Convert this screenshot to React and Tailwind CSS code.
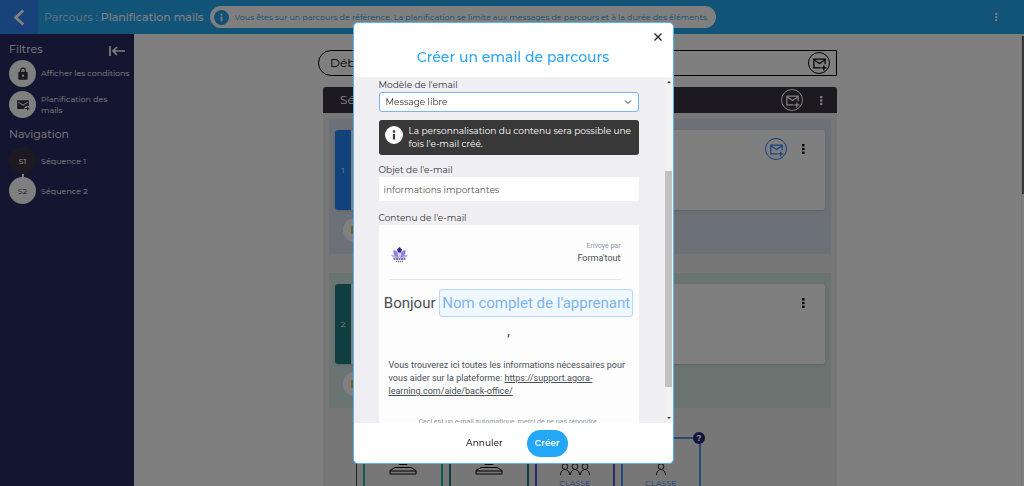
import { useState } from 'react';

function MailPlus({ className }) {
  return (
    <svg viewBox="0 0 24 24" fill="none" stroke="currentColor" strokeWidth="2" className={className} aria-hidden="true">
      <path d="M14 19H3V5h18v8" />
      <path d="M3 6l9 6 9-6" />
      <path d="M19 15v8M15 19h8" />
    </svg>
  );
}

function MailFilled({ className }) {
  return (
    <svg viewBox="0 0 24 24" fill="currentColor" className={className} aria-hidden="true">
      <path d="M2 4h20v9.500a6 6 0 0 0-8 5.500H2zM4 6.300v2l8 5 8-5v-2l-8 5z" fillRule="evenodd" />
      <path d="M19 14v3h-4v2h4v3l4-4z" />
    </svg>
  );
}

function Lock({ className }) {
  return (
    <svg viewBox="0 0 24 24" fill="currentColor" className={className} aria-hidden="true">
      <path
        fillRule="evenodd"
        d="M18 8h-1V6A5 5 0 0 0 7 6v2H6a2 2 0 0 0-2 2v10a2 2 0 0 0 2 2h12a2 2 0 0 0 2-2V10a2 2 0 0 0-2-2zM9 6a3 3 0 0 1 6 0v2H9zm3 11a2 2 0 1 1 0-4 2 2 0 0 1 0 4z"
      />
    </svg>
  );
}

function Dots({ className }) {
  return (
    <svg viewBox="0 0 4 10" fill="currentColor" className={className} aria-hidden="true">
      <rect x="1" y="0" width="2.500" height="2.400" />
      <rect x="1" y="3.800" width="2.500" height="2.400" />
      <rect x="1" y="7.600" width="2.500" height="2.400" />
    </svg>
  );
}

function Info({ className }) {
  return (
    <svg viewBox="0 0 18 18" className={className} aria-hidden="true">
      <circle cx="9" cy="9" r="9" fill="currentColor" />
      <g className="fill-white group-data-[dark=true]:fill-[#383838]">
        <circle cx="9" cy="5.500" r="1.300" />
        <path d="M7.900 8h2.200v5.500H7.900z" />
      </g>
    </svg>
  );
}

function Computer() {
  return (
    <svg viewBox="0 0 28 32" fill="none" stroke="currentColor" className="h-8 w-7" aria-hidden="true">
      <rect x="3" y="1" width="22" height="16" />
      <path d="M9 19.500h10M8 17h12v2.500l-2 2h-8l-2-2zM6 24.500h16l5 3v3.500H1v-3.500zM1 28h26" />
    </svg>
  );
}

function Person() {
  return (
    <svg viewBox="0 0 10 12" fill="none" stroke="currentColor" strokeWidth="0.9" className="h-3 w-[10px]" aria-hidden="true">
      <circle cx="5" cy="3.600" r="2.900" />
      <path d="M.5 12c0-2.700 1-4.300 3-5M9.500 12c0-2.700-1-4.300-3-5" />
    </svg>
  );
}

function Lotus() {
  return (
    <svg viewBox="0 0 34 32" className="h-4 w-[17px]" role="img" aria-label="Forma'tout">
      <path d="M17 22C11 24 3 22 0 16c5-2 11 0 17 6zM17 22c6 2 14 0 17-6-5-2-11 0-17 6z" fill="#b9abf0" />
      <path d="M16 21C8 20 4 14 5 6c6 1 11 6 11 15zM18 21c8-1 12-7 11-15-6 1-11 6-11 15z" fill="#8f7fdc" />
      <path d="M17 21c-5-4-5-8 0-12 5 4 5 8 0 12z" fill="#d6cffa" />
      <path d="M17 0l5 5-2 6h-6l-2-6z" fill="#35249a" />
      <path d="M5 24h24" stroke="#5d4f86" strokeWidth="3" strokeDasharray="4 1" />
      <path d="M10 29h14" stroke="#8a8690" strokeWidth="3" strokeDasharray="3 1" />
    </svg>
  );
}

function RoundButton({ label, className }) {
  return (
    <button type="button" aria-label={label} className={`flex size-[22px] shrink-0 items-center justify-center rounded-full border ${className}`}>
      <MailPlus className="size-[15px]" />
    </button>
  );
}

function Sidebar() {
  return (
    <aside className="w-[134px] shrink-0 bg-[#262b62] px-[9px] pt-[7px] text-white">
      <div className="flex items-start justify-between">
        <h2 className="text-[11px] leading-4">Filtres</h2>
        <button type="button" aria-label="Réduire le menu" className="pt-[5px]">
          <svg viewBox="0 0 16 10" fill="none" stroke="currentColor" strokeWidth="1.700" className="h-[10px] w-4" aria-hidden="true">
            <path d="M1 0v10M16 5H4M8 1L4 5l4 4" />
          </svg>
        </button>
      </div>
      <ul className="mt-[3px] text-[8px] leading-[11px]">
        <li className="flex items-center gap-[5px] pb-1">
          <button type="button" aria-label="Afficher les conditions" className="flex size-[27px] shrink-0 items-center justify-center rounded-full bg-white text-[#3b3340]">
            <Lock className="size-[14px]" />
          </button>
          <span className="whitespace-nowrap">Afficher les conditions</span>
        </li>
        <li className="flex items-center gap-[5px]">
          <button type="button" aria-label="Planification des mails" className="flex size-[27px] shrink-0 items-center justify-center rounded-full bg-white text-[#3b3340]">
            <MailFilled className="size-[14px]" />
          </button>
          <span className="w-[68px]">Planification des mails</span>
        </li>
      </ul>
      <h2 className="mt-2 text-[11px] leading-4">Navigation</h2>
      <nav className="mt-[5px] flex flex-col text-[8px]">
        <a href="#s1" className="flex items-center gap-[5px]">
          <span className="flex size-[27px] items-center justify-center rounded-full bg-[#3b3340] font-medium">S1</span>
          Séquence 1
        </a>
        <span className="ml-[13px] h-[3px] w-[2px] bg-white" />
        <a href="#s2" className="flex items-center gap-[5px]">
          <span className="flex size-[27px] items-center justify-center rounded-full bg-white text-[#3b3340]">S2</span>
          Séquence 2
        </a>
      </nav>
    </aside>
  );
}

function Step({ number, zone, stripe, withMail }) {
  return (
    <section className={`px-[6px] pt-[11px] pb-3 ${zone}`}>
      <div className="flex h-20 overflow-hidden rounded-[3px] bg-white shadow-sm">
        <div className={`flex w-4 items-center justify-center text-[8px] text-white ${stripe}`}>{number}</div>
        <div className="flex flex-1 items-start justify-end gap-[14px] pt-2 pr-5">
          {withMail && <RoundButton label="Ajouter un email" className="border-[#2f86ff] text-[#2f86ff]" />}
          <button type="button" aria-label="Options" className="flex h-[22px] items-center">
            <Dots className="h-[10px] w-1" />
          </button>
        </div>
      </div>
      <div className="mt-2 ml-2 flex size-6 items-center justify-center rounded-full bg-white">
        <span className="h-2 w-2 rounded-[1px] bg-[#ffb21c]" />
      </div>
    </section>
  );
}

function Activities() {
  return (
    <div className="ml-[33px] flex gap-[6px] border-l border-[#444] pl-[6px] text-[8px] text-[#3a82ea]">
      <div className="flex h-20 w-20 flex-col items-center border-2 border-[#25b79b] pt-1 text-black">
        <Computer />
      </div>
      <div className="flex h-20 w-20 flex-col items-center border-2 border-[#1d7f84] pt-1 text-black">
        <Computer />
      </div>
      <div className="flex h-20 w-20 flex-col items-center border-2 border-[#5b56c9] pt-6 text-[#5b6fd8]">
        <div className="flex text-black">
          <Person />
          <Person />
          <Person />
        </div>
        <span className="mt-[2px]">CLASSE</span>
      </div>
      <div className="relative flex h-20 w-20 flex-col items-center border-2 border-[#4b96f5] pt-6">
        <span className="absolute -top-[7px] -right-[6px] flex size-3 items-center justify-center rounded-full bg-[#262b7a] text-[9px] font-bold text-white">?</span>
        <span className="text-black">
          <Person />
        </span>
        <span className="mt-[2px]">CLASSE</span>
      </div>
    </div>
  );
}

function Course() {
  return (
    <main className="flex flex-1 overflow-hidden bg-white">
      <div className="mx-auto w-full max-w-[519px] pt-4">
        <div className="flex h-[26px] items-center justify-between rounded-l-full border border-black pr-[6px] pl-[11px] text-xs">
          Début
          <RoundButton label="Ajouter un email au début" className="border-black" />
        </div>
        <div className="mt-[11px] ml-[5px] bg-[#f1efef]">
          <div className="flex h-[26px] items-center rounded-t-[3px] bg-[#3b3340] px-[17px] text-xs text-white">
            <span className="flex-1">Séquence 1</span>
            <RoundButton label="Ajouter un email à la séquence" className="border-white" />
            <button type="button" aria-label="Options de la séquence" className="-mr-[5px] ml-[14px] px-[2px]">
              <Dots className="h-[9px] w-1" />
            </button>
          </div>
          <div className="flex flex-col gap-[19px] px-[6px] pt-[6px]">
            <Step number="1" zone="bg-[#d8e2f0]" stripe="bg-[#2385f8]" withMail />
            <Step number="2" zone="bg-[#d4e8e2]" stripe="bg-[#1c7c80]" />
          </div>
          <div className="mt-[29px]">
            <Activities />
          </div>
        </div>
      </div>
      <div className="w-[3px] border-l border-[#eee]">
        <div className="mt-[2px] h-[35%] bg-[#6d6d6d]" />
      </div>
    </main>
  );
}

function EmailPreview() {
  return (
    <article className="bg-[#fdfdfd] pt-4 text-[#4a4f55] [font-family:Roboto,sans-serif]">
      <div className="mr-[18px] ml-[10px] flex items-center justify-between border-b border-[#e3e6ea] pb-[14px]">
        <div className="px-[2px] pt-1">
          <Lotus />
        </div>
        <div className="text-right">
          <p className="text-[7px] leading-[10px] text-[#8e98a8]">Envoyé par</p>
          <p className="text-[9px] leading-[14px]">Forma'tout</p>
        </div>
      </div>
      <p className="mt-[9px] text-center text-[15px] leading-7 whitespace-nowrap">
        Bonjour{' '}
        <span className="inline-block rounded-[3px] border border-[#b4d8fb] bg-[#f0f8ff] px-[2px] leading-[26px] text-[#7db5f0]">
          Nom complet de l'apprenant
        </span>
        <span className="block">,</span>
      </p>
      <p className="mt-[14px] px-[10px] text-[9px] leading-[13px]">
        Vous trouverez ici toutes les informations nécessaires pour vous aider sur la plateforme:{' '}
        <a href="#aide" className="underline">
          https://support.agora-learning.com/aide/back-office/
        </a>
      </p>
      <p className="mt-[19px] text-center text-[7px] leading-[10px] whitespace-nowrap text-[#8e98a8]">
        Ceci est un e-mail automatique, merci de ne pas répondre.
      </p>
    </article>
  );
}

function Scrollbar() {
  return (
    <div className="flex w-2 shrink-0 flex-col items-center justify-between bg-[#f1f1f1] py-1" aria-hidden="true">
      <svg viewBox="0 0 4 2" className="h-[2px] w-1 fill-[#404040]">
        <path d="M0 2h4L2 0z" />
      </svg>
      <div className="mt-[58px] h-[216px] w-[7px] bg-[#c1c1c1]" />
      <svg viewBox="0 0 4 2" className="h-[2px] w-1 fill-[#404040]">
        <path d="M0 0h4L2 2z" />
      </svg>
    </div>
  );
}

function EmailDialog() {
  const [subject, setSubject] = useState('informations importantes');

  return (
    <div className="fixed inset-0 flex justify-center bg-black/50 py-[22px] pl-[2px]">
      <form
        role="dialog"
        aria-labelledby="dialog-title"
        onSubmit={(e) => e.preventDefault()}
        className="flex w-full max-w-[321px] flex-col overflow-hidden rounded-[5px] border border-[#55b4f2] bg-white text-[#333]"
      >
        <div className="relative flex h-[54px] shrink-0 items-end justify-center pb-[10px]">
          <h1 id="dialog-title" className="text-[14px] leading-5 font-medium text-[#28a5f5]">
            Créer un email de parcours
          </h1>
          <button type="button" aria-label="Fermer" className="absolute top-[10px] right-[11px]">
            <svg viewBox="0 0 8 8" stroke="#222" strokeWidth="1.300" className="size-2" aria-hidden="true">
              <path d="M.5.500l7 7M7.500.500l-7 7" />
            </svg>
          </button>
        </div>

        <div className="flex min-h-0 flex-1 bg-[#efeef3]">
          <div className="min-w-0 flex-1 overflow-hidden pr-[26px] pl-[25px] text-[9px]">
            <label htmlFor="model" className="block leading-[15px]">
              Modèle de l'email
            </label>
            <div className="relative">
              <select id="model" className="h-5 w-full appearance-none rounded-[3px] border border-[#78b4f8] bg-white px-[6px]">
                <option>Message libre</option>
              </select>
              <svg viewBox="0 0 8 5" fill="none" stroke="#333" className="pointer-events-none absolute top-2 right-[7px] h-[5px] w-2" aria-hidden="true">
                <path d="M1 .5l3 3 3-3" />
              </svg>
            </div>
            <div className="group mt-2 flex items-start gap-[6px] rounded-[3px] bg-[#383838] px-[6px] pt-1 pb-[5px] leading-[13px] text-white" data-dark="true">
              <Info className="mt-[2px] size-[18px] shrink-0 text-white" />
              <p>La personnalisation du contenu sera possible une fois l'e-mail créé.</p>
            </div>
            <label htmlFor="subject" className="mt-[7px] block leading-[15px]">
              Objet de l'e-mail
            </label>
            <input
              id="subject"
              type="text"
              value={subject}
              onChange={(e) => setSubject(e.target.value)}
              className="h-6 w-full bg-white px-[5px] text-[#555]"
            />
            <h2 className="mt-[9px] leading-[15px]">Contenu de l'e-mail</h2>
            <EmailPreview />
          </div>
          <Scrollbar />
        </div>

        <div className="flex h-10 shrink-0 items-center justify-center gap-6 pl-2 text-[9px] font-medium">
          <button type="button">Annuler</button>
          <button type="submit" className="h-[27px] rounded-full bg-[#24a7f6] px-2 font-semibold text-white">
            Créer
          </button>
        </div>
      </form>
    </div>
  );
}

export default function App() {
  return (
    <div className="flex h-screen flex-col overflow-hidden [font-family:Montserrat,Inter,sans-serif]">
      <header className="flex h-[34px] shrink-0 items-center bg-[#24a7f0] text-white">
        <button type="button" aria-label="Retour" className="flex h-full w-[38px] items-center justify-center bg-[#2f86f5]">
          <svg viewBox="0 0 12 18" fill="none" stroke="currentColor" strokeWidth="3" className="h-[17px] w-3" aria-hidden="true">
            <path d="M10.500 1.500L2.500 9l8 7.500" />
          </svg>
        </button>
        <h1 className="ml-[6px] text-[11px] whitespace-nowrap">
          <span className="opacity-80">Parcours :</span> <span className="font-medium">Planification mails</span>
        </h1>
        <div className="group ml-[6px] flex h-[22px] items-center gap-[6px] rounded-full bg-white pr-2 pl-1 text-[8px] whitespace-nowrap text-[#24a0e8]">
          <Info className="size-[15px]" />
          Vous êtes sur un parcours de référence. La planification se limite aux messages de parcours et à la durée des éléments.
        </div>
        <button type="button" aria-label="Menu" className="mr-[26px] ml-auto">
          <Dots className="h-2 w-1" />
        </button>
      </header>
      <div className="flex min-h-0 flex-1">
        <Sidebar />
        <Course />
      </div>
      <EmailDialog />
    </div>
  );
}
